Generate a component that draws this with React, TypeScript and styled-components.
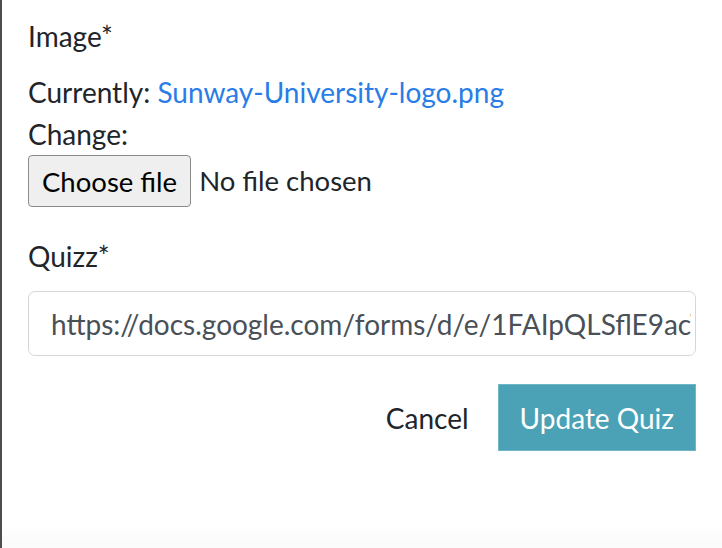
import styled, { createGlobalStyle } from 'styled-components';

const GlobalStyle = createGlobalStyle`
  html, body {
    margin: 0;
    padding: 0;
    height: 100%;
  }
  body {
    font-family: Lato, 'Open Sans', sans-serif;
    color: #212529;
    background: linear-gradient(to bottom, #ffffff 522px, #fafafa 548px);
  }
  #root {
    height: 100%;
  }
`;

const Panel = styled.form({
  boxSizing: 'border-box',
  height: '100%',
  borderLeft: '2px solid #4d4d4d',
  padding: '15px 26px 0 26px',
  fontSize: '28px',
  lineHeight: '42px'
});

const Group = styled.div({
  display: 'flex',
  flexDirection: 'column',
  alignItems: 'flex-start',
  marginBottom: '28px'
});

const Label = styled.label({
  display: 'block',
  marginBottom: '14px'
});

const FileLine = styled.div({
  display: 'flex',
  alignItems: 'center',
  gap: '8px',
  fontSize: '27.5px'
});

const Link = styled.a({
  color: '#2a7de6',
  textDecoration: 'none'
});

const FileButton = styled.button({
  boxSizing: 'border-box',
  height: '52px',
  padding: '0 13px',
  fontFamily: 'inherit',
  fontSize: 'inherit',
  color: '#000',
  background: '#efefef',
  border: '1px solid #8a8a8a',
  borderRadius: '4px'
});

const TextInput = styled.input({
  boxSizing: 'border-box',
  width: '100%',
  height: '65px',
  padding: '0 4px 0 22px',
  fontFamily: 'inherit',
  fontSize: '28px',
  color: '#495057',
  background: '#fff',
  border: '1px solid #d3d7db',
  borderRadius: '7px',
  outline: 'none'
});

const Actions = styled.div({
  display: 'flex',
  justifyContent: 'flex-end',
  alignItems: 'center',
  gap: '29px'
});

const Button = styled.button<{ $primary?: boolean }>(({ $primary }) => ({
  boxSizing: 'border-box',
  height: '67px',
  padding: $primary ? '0 21px' : '0',
  fontFamily: 'inherit',
  fontSize: '28px',
  color: $primary ? '#fff' : '#212529',
  background: $primary ? '#4ba2b6' : 'transparent',
  border: $primary ? '1px solid #6fb6c6' : 'none',
  borderRadius: 0
}));

export default function App() {
  return (
    <>
      <GlobalStyle />
      <Panel onSubmit={(e) => e.preventDefault()}>
        <Group>
          <Label>Image*</Label>
          <div>
            Currently: <Link href="#">Sunway-University-logo.png</Link>
          </div>
          <div>Change:</div>
          <FileLine>
            <FileButton type="button">Choose file</FileButton>
            <span>No file chosen</span>
          </FileLine>
        </Group>
        <Group>
          <Label>Quizz*</Label>
          <TextInput
            type="text"
            readOnly
            defaultValue="https://docs.google.com/forms/d/e/1FAIpQLSflE9acWq3vR8tBn/viewform"
          />
        </Group>
        <Actions>
          <Button type="button">Cancel</Button>
          <Button type="submit" $primary>Update Quiz</Button>
        </Actions>
      </Panel>
    </>
  );
}
